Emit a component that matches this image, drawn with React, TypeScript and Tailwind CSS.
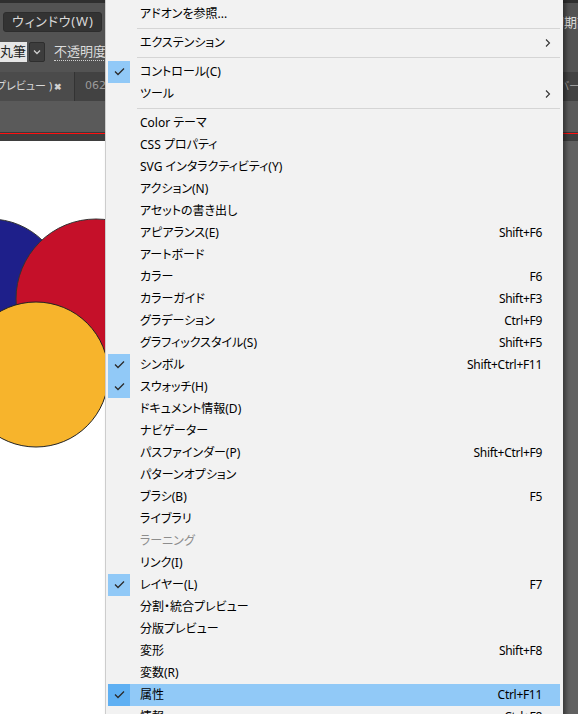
import React from 'react';

type Row =
  | 'sep'
  | {
      label: string;
      shortcut?: string;
      checked?: boolean;
      sub?: boolean;
      disabled?: boolean;
      active?: boolean;
    };

const rows: Row[] = [
  { label: 'アドオンを参照...' },
  'sep',
  { label: 'エクステンション', sub: true },
  'sep',
  { label: 'コントロール(C)', checked: true },
  { label: 'ツール', sub: true },
  'sep',
  { label: 'Color テーマ' },
  { label: 'CSS プロパティ' },
  { label: 'SVG インタラクティビティ(Y)' },
  { label: 'アクション(N)' },
  { label: 'アセットの書き出し' },
  { label: 'アピアランス(E)', shortcut: 'Shift+F6' },
  { label: 'アートボード' },
  { label: 'カラー', shortcut: 'F6' },
  { label: 'カラーガイド', shortcut: 'Shift+F3' },
  { label: 'グラデーション', shortcut: 'Ctrl+F9' },
  { label: 'グラフィックスタイル(S)', shortcut: 'Shift+F5' },
  { label: 'シンボル', shortcut: 'Shift+Ctrl+F11', checked: true },
  { label: 'スウォッチ(H)', checked: true },
  { label: 'ドキュメント情報(D)' },
  { label: 'ナビゲーター' },
  { label: 'パスファインダー(P)', shortcut: 'Shift+Ctrl+F9' },
  { label: 'パターンオプション' },
  { label: 'ブラシ(B)', shortcut: 'F5' },
  { label: 'ライブラリ' },
  { label: 'ラーニング', disabled: true },
  { label: 'リンク(I)' },
  { label: 'レイヤー(L)', shortcut: 'F7', checked: true },
  { label: '分割・統合プレビュー' },
  { label: '分版プレビュー' },
  { label: '変形', shortcut: 'Shift+F8' },
  { label: '変数(R)' },
  { label: '属性', shortcut: 'Ctrl+F11', checked: true, active: true },
  { label: '情報', shortcut: 'Ctrl+F8' },
];

function Check() {
  return (
    <svg width="22" height="22" viewBox="0 0 22 22">
      <path d="M7 10.5 L10 13.5 L16 7.5" fill="none" stroke="#2b2b2b" strokeWidth="1.3" />
    </svg>
  );
}

function Arrow() {
  return (
    <svg width="6" height="8" viewBox="0 0 6 8">
      <path d="M1 0.5 L4.5 4 L1 7.5" fill="none" stroke="#333" strokeWidth="1.1" />
    </svg>
  );
}

function MenuRow({ row }: { row: Row }) {
  if (row === 'sep') {
    return (
      <div className="flex h-[7px] items-center pl-[31px] pr-[3px]">
        <div className="h-px w-full bg-[#d5d5d5]" />
      </div>
    );
  }
  return (
    <div
      className={`ml-[2px] mr-[3px] flex h-[22px] items-center ${row.active ? 'bg-[#91c9f7]' : ''} ${
        row.disabled ? 'text-[#8d8d8d]' : 'text-black'
      }`}
    >
      <div
        className={`flex h-[22px] w-[22px] shrink-0 items-center justify-center ${
          row.checked ? (row.active ? 'bg-[#5fb0f3]' : 'bg-[#91c9f7]') : ''
        }`}
      >
        {row.checked && <Check />}
      </div>
      <span className="ml-[10px] flex-1 whitespace-nowrap">{row.label}</span>
      {row.shortcut && <span className="mr-[18px] whitespace-nowrap tracking-[-0.3px]">{row.shortcut}</span>}
      {row.sub && (
        <span className="mr-[9px] flex items-center">
          <Arrow />
        </span>
      )}
    </div>
  );
}

export default function App() {
  return (
    <div className="relative h-[714px] w-[578px] overflow-hidden bg-[#535353] font-['Noto_Sans','Noto_Sans_CJK_JP',sans-serif] text-[12px] [font-feature-settings:'palt']">
      {/* Illustrator chrome behind the menu */}
      <div className="flex h-full flex-col">
        <div className="h-[3px] bg-[#2f2f2f]" />
        <div className="flex h-[35px] items-start bg-[#535353] pt-[9px]">
          <div className="ml-[3px] flex h-[20px] w-[99px] items-center rounded-[3px] border border-[#2d2d2d] bg-[#333333] pl-[8px] text-[13px] tracking-[0.8px] text-[#d8d8d8]">
            ウィンドウ(W)
          </div>
          <div className="flex-1" />
          <span className="mt-[1px] w-[27px] overflow-hidden whitespace-nowrap text-[13px] text-[#dcdcdc]">初期設定</span>
        </div>
        <div className="flex h-[34px] items-start bg-[#535353] pt-[4px]">
          <div className="flex h-[20px] w-[27px] items-center justify-end overflow-hidden bg-[#e6e6e6] pr-[1px] text-[13px] text-[#222]">
            丸筆
          </div>
          <div className="ml-[2px] flex h-[20px] w-[16px] items-center justify-center rounded-[2px] border border-[#2e2e2e] bg-[#3d3d3d]">
            <svg width="8" height="6" viewBox="0 0 8 6">
              <path d="M1 1.5 L4 4.5 L7 1.5" fill="none" stroke="#d0d0d0" strokeWidth="1.3" />
            </svg>
          </div>
          <span className="ml-[9px] mt-[1px] border-b border-dotted border-[#cfcfcf] text-[13px] leading-[17px] text-[#dcdcdc]">
            不透明度
          </span>
        </div>
        <div className="flex h-[29px] bg-[#424242]">
          <div className="flex w-[75px] items-center overflow-hidden border-r border-[#333] bg-[#4b4b4b] text-[#d8d8d8]">
            <span className="-ml-[4px] whitespace-nowrap text-[11px]">プレビュー )</span>
            <span className="ml-auto mr-[12px] text-[9px] font-bold text-[#d0d0d0]">✖</span>
          </div>
          <div className="flex flex-1 items-center justify-between pl-[10px] text-[12px] text-[#9a9a9a]">
            <span className="font-['DejaVu_Sans',sans-serif] text-[11px]">062</span>
            <span className="-mr-[2px] text-[11px]">ンバー</span>
          </div>
        </div>
        <div className="h-[31px] bg-[#5a5a5a]" />
        <div className="h-px bg-[#3a3a3a]" />
        <div className="h-px bg-[#ff1010]" />
        <div className="h-[7px] bg-[#3e3e3e]" />
        <div className="flex flex-1">
          <div className="relative flex-1 bg-white">
            <svg className="absolute left-0 top-0" width="120" height="330" viewBox="0 0 120 330">
              <circle cx="-10" cy="153" r="75" fill="#1e1f8a" stroke="#333" strokeWidth="1" />
              <circle cx="96" cy="158" r="80" fill="#c51029" stroke="#333" strokeWidth="1" />
              <circle cx="36" cy="233.5" r="72.5" fill="#f7b42c" stroke="#222" strokeWidth="1" />
            </svg>
          </div>
          <div className="w-[15px] bg-[#616161]" />
        </div>
      </div>

      {/* Window menu dropdown */}
      <div className="absolute left-[105px] top-0 w-[458px] border-l border-[#cdcdcd] bg-[#f2f2f2] pt-[3px] shadow-[3px_0_4px_rgba(0,0,0,0.4)]">
        {rows.map((row, i) => (
          <MenuRow key={i} row={row} />
        ))}
      </div>
    </div>
  );
}
